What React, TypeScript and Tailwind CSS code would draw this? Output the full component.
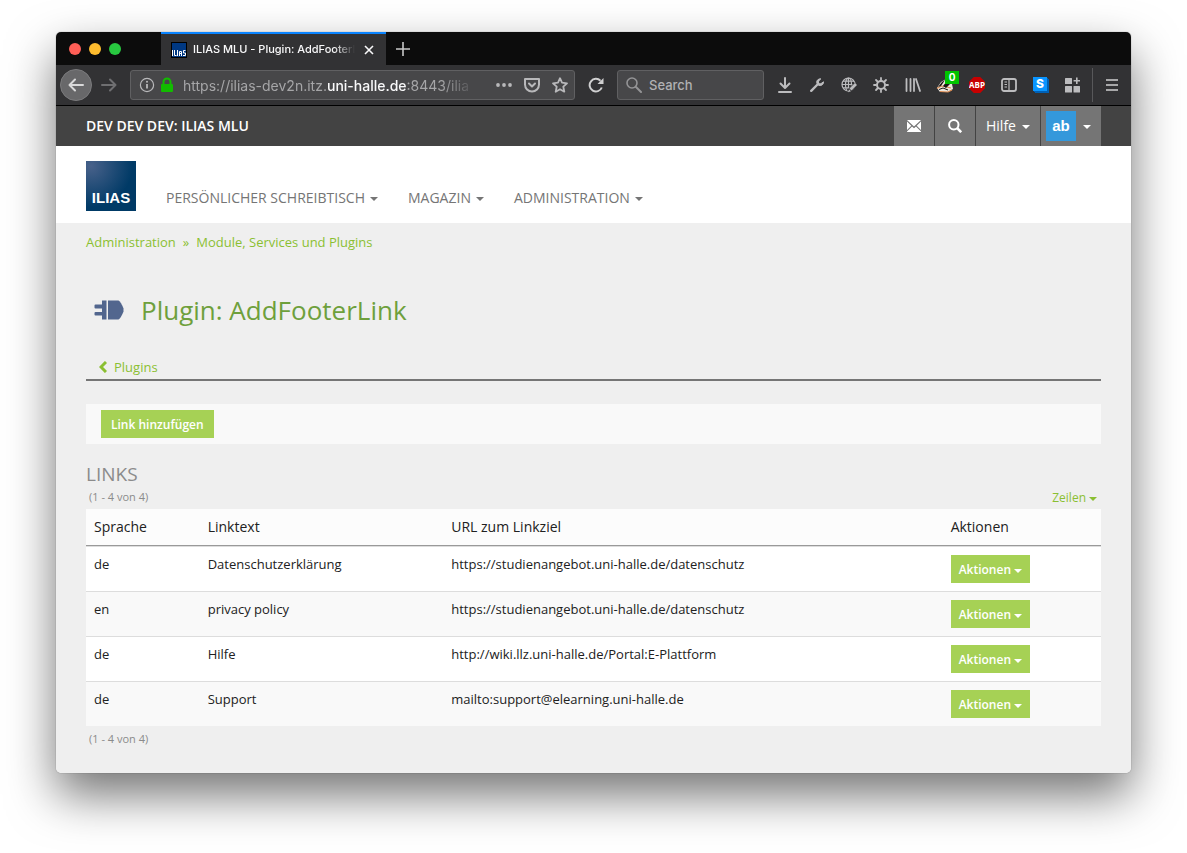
import type { ReactNode } from "react";

type LinkRow = { lang: string; text: string; url: string };

const rows: LinkRow[] = [
  { lang: "de", text: "Datenschutzerklärung", url: "https://studienangebot.uni-halle.de/datenschutz" },
  { lang: "en", text: "privacy policy", url: "https://studienangebot.uni-halle.de/datenschutz" },
  { lang: "de", text: "Hilfe", url: "http://wiki.llz.uni-halle.de/Portal:E-Plattform" },
  { lang: "de", text: "Support", url: "mailto:support@elearning.uni-halle.de" },
];

function Caret() {
  return (
    <span
      aria-hidden="true"
      className="mt-0.5 inline-block h-0 w-0 border-x-4 border-t-4 border-x-transparent border-t-current"
    />
  );
}

function ToolButton({ label, children }: { label: string; children: ReactNode }) {
  return (
    <button type="button" aria-label={label} className="relative flex h-8 w-8 shrink-0 items-center justify-center">
      {children}
    </button>
  );
}

function Stroke({ children }: { children: ReactNode }) {
  return (
    <svg
      className="shrink-0"
      width="16"
      height="16"
      viewBox="0 0 16 16"
      fill="none"
      stroke="currentColor"
      strokeWidth="2"
      strokeLinecap="round"
      strokeLinejoin="round"
      aria-hidden="true"
    >
      {children}
    </svg>
  );
}

function TabStrip() {
  return (
    <div className="flex h-[33px] bg-[#0c0c0c]">
      <div className="flex w-[105px] items-center gap-2 pl-[13px]">
        <button type="button" aria-label="Close window" className="h-3 w-3 rounded-full bg-[#ff5f57]" />
        <button type="button" aria-label="Minimize window" className="h-3 w-3 rounded-full bg-[#febc2e]" />
        <button type="button" aria-label="Zoom window" className="h-3 w-3 rounded-full bg-[#28c840]" />
      </div>
      <div className="flex w-[225px] items-center gap-1.5 border-t-2 border-[#0a84ff] bg-[#323234] pr-[9px] pl-2.5 text-[#f9f9fa]">
        <span className="flex h-4 w-4 shrink-0 items-end justify-center border border-black bg-[#003882]">
          <svg width="14" height="8" viewBox="0 0 14 8" fill="none" stroke="#fff" aria-hidden="true">
            <path d="M.5 1v6M2.500 1v5.500h2M5.500 1v6M7.500 7V2.500h2V7M7.500 4.500h2M13.500 1.500h-2v2.500h2v2.500h-2.500" />
          </svg>
        </span>
        <span className="min-w-0 flex-1 text-[11px] font-medium whitespace-nowrap [mask-image:linear-gradient(to_right,black_87%,transparent)]">
          ILIAS MLU - Plugin: AddFooterL
        </span>
        <button type="button" aria-label="Close tab" className="flex h-4 w-4 shrink-0 items-center justify-center">
          <svg width="10" height="10" viewBox="0 0 10 10" stroke="currentColor" strokeWidth="1.600" aria-hidden="true">
            <path d="M1 1l8 8M9 1l-8 8" />
          </svg>
        </button>
      </div>
      <button type="button" aria-label="New tab" className="flex w-[34px] items-center justify-center text-[#c8c8c8]">
        <svg width="14" height="14" viewBox="0 0 14 14" stroke="currentColor" strokeWidth="1.600" aria-hidden="true">
          <path d="M7 0v14M0 7h14" />
        </svg>
      </button>
    </div>
  );
}

function AddressBar() {
  return (
    <div className="flex h-[30px] min-w-0 flex-1 items-center rounded-[3px] border border-[#606062] bg-[#474749] pr-1.5 pl-2 text-[#b8b8ba]">
      <button type="button" aria-label="Site information" className="shrink-0">
        <svg width="16" height="16" viewBox="0 0 16 16" fill="none" stroke="currentColor" strokeWidth="1.200" aria-hidden="true">
          <circle cx="8" cy="8" r="6.600" />
          <path d="M8 7v4.500" strokeWidth="1.800" />
          <circle cx="8" cy="4.700" r="1" fill="currentColor" stroke="none" />
        </svg>
      </button>
      <svg className="ml-1 shrink-0" width="16" height="16" viewBox="0 0 16 16" fill="none" aria-hidden="true">
        <path d="M4.500 8V5a3.500 3.500 0 0 1 7 0v3" stroke="#12bc00" strokeWidth="2" />
        <rect x="2" y="7" width="12" height="8" rx="1" fill="#12bc00" />
      </svg>
      <div
        role="textbox"
        aria-label="Address"
        tabIndex={0}
        className="ml-2 min-w-0 flex-1 pt-0.5 text-sm whitespace-nowrap text-[#a6a6a8] [mask-image:linear-gradient(to_right,black_88%,transparent)]"
      >
        https://ilias-dev2n.itz.<span className="font-medium text-[#f9f9fa]">uni-halle.de</span>:8443/ilia
      </div>
      <div className="ml-5 flex shrink-0 gap-3">
        <button type="button" aria-label="Page actions">
          <svg width="16" height="16" viewBox="0 0 16 16" fill="currentColor" aria-hidden="true">
            <circle cx="2" cy="8" r="1.900" />
            <circle cx="8" cy="8" r="1.900" />
            <circle cx="14" cy="8" r="1.900" />
          </svg>
        </button>
        <button type="button" aria-label="Save to Pocket">
          <Stroke>
            <path d="M1 2h14v5.500a7 7 0 0 1-14 0z" />
            <path d="M5 6.500L8 9.500l3-3" />
          </Stroke>
        </button>
        <button type="button" aria-label="Bookmark this page">
          <svg width="16" height="16" viewBox="0 0 16 16" fill="none" stroke="currentColor" strokeWidth="1.800" strokeLinejoin="round" aria-hidden="true">
            <path d="M8 1.200l2 4.500 5 .6-3.700 3.400 1 5L8 12.200l-4.300 2.500 1-5L1 6.300l5-.6z" />
          </svg>
        </button>
      </div>
    </div>
  );
}

function Extensions() {
  return (
    <div className="flex shrink-0 text-[#bcbcbe]">
      <ToolButton label="Downloads">
        <Stroke>
          <path d="M8 1v9.500M3.500 6.500L8 11l4.500-4.500M2 15h12" />
        </Stroke>
      </ToolButton>
      <ToolButton label="Developer tools">
        <svg width="16" height="16" viewBox="0 0 16 16" fill="none" stroke="currentColor" strokeLinecap="round" aria-hidden="true">
          <path d="M2.200 13.800L8.500 7.500" strokeWidth="2.400" />
          <path d="M11.500 1.800a3.400 3.400 0 1 0 3 3L12 6.500 9.600 4.600z" fill="currentColor" strokeWidth="1" strokeLinejoin="round" />
          <path d="M11 5.200l3-3" stroke="#323234" strokeWidth="2" />
        </svg>
      </ToolButton>
      <ToolButton label="Web developer">
        <svg width="16" height="16" viewBox="0 0 16 16" fill="none" stroke="currentColor" strokeWidth="1.200" aria-hidden="true">
          <circle cx="7.500" cy="7.500" r="6.500" />
          <ellipse cx="7.500" cy="7.500" rx="3" ry="6.500" />
          <path d="M1 7.500h13M2 4.200h11M2 10.800h9M7.500 1v13" />
          <path d="M7.500 14.500l7.500-7.500" stroke="#323234" strokeWidth="4.500" />
          <path d="M9.500 12.500l5.500-5.500" strokeWidth="3" />
          <path d="M7 15.200l1-3 2 2z" fill="currentColor" stroke="none" />
        </svg>
      </ToolButton>
      <ToolButton label="Preferences">
        <svg width="16" height="16" viewBox="0 0 16 16" fill="none" stroke="currentColor" strokeWidth="2" strokeLinecap="round" aria-hidden="true">
          <circle cx="8" cy="8" r="4" />
          <path d="M8 1v2M8 13v2M1 8h2M13 8h2M3 3l1.500 1.500M11.500 11.500L13 13M13 3l-1.500 1.500M4.500 11.500L3 13" strokeWidth="1.800" />
        </svg>
      </ToolButton>
      <ToolButton label="Library">
        <Stroke>
          <path d="M1.500 2v12M5.500 2v12M9 2v12M11 2l4 12" strokeWidth="1.800" />
        </Stroke>
      </ToolButton>
      <ToolButton label="Privacy Badger">
        <svg width="18" height="16" viewBox="0 0 18 16" aria-hidden="true">
          <path d="M1 11L5 5 10 2l6 5 1 5-5 3H4z" fill="#ede7df" />
          <path d="M1 11.500l4-2.500 4 .5 6 1.500M4 14.500l8 .5 4-2" fill="none" stroke="#db8a52" strokeWidth="1.200" />
          <path d="M2 10l4-5 3-2-4 6zM7 9l4-5 3 3-4 4z" fill="#1c1815" />
          <path d="M3 12.500l4-1.500 5 2" fill="none" stroke="#1c1815" />
        </svg>
        <span className="absolute top-0.5 right-0.5 flex h-[13px] w-3.5 items-center justify-center bg-[#00c400] text-[10px] font-bold text-white">
          0
        </span>
      </ToolButton>
      <ToolButton label="Adblock Plus">
        <span className="flex h-4 w-4 items-center justify-center bg-[#c70000] font-['Open_Sans',sans-serif] text-[8px] leading-4 font-bold text-white [clip-path:polygon(30%_0,70%_0,100%_30%,100%_70%,70%_100%,30%_100%,0_70%,0_30%)]">
          ABP
        </span>
      </ToolButton>
      <ToolButton label="Sidebars">
        <svg width="16" height="16" viewBox="0 0 16 16" fill="none" stroke="currentColor" aria-hidden="true">
          <rect x="1" y="2" width="14" height="12" rx="2" strokeWidth="1.800" />
          <path d="M8 2v12M3.500 5h2.500M3.500 7.500h2.500M3.500 10h2.500" strokeWidth="1.200" />
        </svg>
      </ToolButton>
      <ToolButton label="Stylish">
        <span className="mr-0.5 mb-0.5 flex h-[14px] w-[14px] items-center justify-center bg-[#0a95ff] text-xs font-extrabold text-white shadow-[1px_1px_0_#0060b5,2px_2px_0_#0060b5]">
          S
        </span>
      </ToolButton>
      <ToolButton label="Add-ons">
        <svg width="16" height="16" viewBox="0 0 16 16" fill="currentColor" aria-hidden="true">
          <rect x="0" y="1" width="7" height="6" rx=".5" />
          <rect x="0" y="9" width="7" height="6.500" rx=".5" />
          <rect x="8.500" y="9" width="6.500" height="6.500" rx=".5" />
          <path d="M11 .5h1.600v2.400h2.400v1.600h-2.400v2.400H11V4.500H8.600V2.900H11z" />
        </svg>
      </ToolButton>
    </div>
  );
}

function NavBar() {
  return (
    <div className="flex h-[41px] items-center border-b border-black bg-[#323234] px-1">
      <button type="button" aria-label="Back" className="flex h-8 w-8 shrink-0 items-center justify-center rounded-full border border-[#7b7b7d] bg-[#68686a] text-[#d9d9da]">
        <Stroke>
          <path d="M15 8H1.500M7 2.500L1.500 8 7 13.500" />
        </Stroke>
      </button>
      <button type="button" aria-label="Forward" className="flex w-[38px] shrink-0 items-center pl-[9px] text-[#6f6f71]">
        <Stroke>
          <path d="M1 8h13.500M9 2.500L14.500 8 9 13.500" />
        </Stroke>
      </button>
      <AddressBar />
      <button type="button" aria-label="Reload" className="flex w-[42px] shrink-0 items-center justify-center text-[#cfcfd0]">
        <svg width="16" height="16" viewBox="0 0 16 16" fill="none" stroke="currentColor" strokeWidth="2" aria-hidden="true">
          <path d="M13.800 10.500A6.300 6.300 0 1 1 12.500 3.800" />
          <path d="M15.500 1v6h-6z" fill="currentColor" stroke="none" />
        </svg>
      </button>
      <label className="mr-[5px] flex h-[30px] w-[147px] shrink-0 items-center gap-[7px] rounded-[3px] border border-[#606062] bg-[#474749] pl-2 text-[#949496]">
        <Stroke>
          <circle cx="6" cy="6" r="5" strokeWidth="1.600" />
          <path d="M10 10l5 5" />
        </Stroke>
        <input
          type="search"
          aria-label="Search"
          placeholder="Search"
          className="w-full min-w-0 bg-transparent pt-0.5 text-[13px] font-medium outline-none placeholder:text-[#b1b1b3]"
        />
      </label>
      <Extensions />
      <div className="ml-[3px] h-[34px] w-px shrink-0 bg-[#58585a]" />
      <button type="button" aria-label="Menu" className="ml-1 flex h-8 w-[30px] shrink-0 items-center justify-center text-[#cfcfd0]">
        <svg width="12" height="12" viewBox="0 0 12 12" stroke="currentColor" strokeWidth="1.600" aria-hidden="true">
          <path d="M0 1h12M0 6h12M0 11h12" />
        </svg>
      </button>
    </div>
  );
}

function TopBar() {
  return (
    <div className="flex h-10 items-center justify-between bg-[#434343] px-[30px] text-sm text-white">
      <span className="font-semibold">DEV DEV DEV: ILIAS MLU</span>
      <div className="flex h-full gap-px">
        <button type="button" aria-label="Mail" className="flex w-10 items-center justify-center bg-[#757575]">
          <svg width="14" height="12" viewBox="0 0 14 12" fill="currentColor" aria-hidden="true">
            <path d="M0 0h14L7 6.500zM0 1.500L4.300 5.700 0 10zM14 1.500V10L9.700 5.700zM0 12v-.5l5-5 2 1.800 2-1.800 5 5v.5z" />
          </svg>
        </button>
        <button type="button" aria-label="Suche" className="flex w-10 items-center justify-center bg-[#757575]">
          <svg width="14" height="14" viewBox="0 0 14 14" fill="none" stroke="currentColor" strokeWidth="2" aria-hidden="true">
            <circle cx="5.800" cy="5.800" r="4.700" />
            <path d="M9.200 9.200l4 4" strokeWidth="2.600" />
          </svg>
        </button>
        <button type="button" className="flex w-16 items-center justify-center gap-1.5 bg-[#757575]">
          Hilfe <Caret />
        </button>
        <button type="button" className="flex w-[60px] items-center gap-[7px] bg-[#757575] pl-[5px]">
          <span className="flex h-[30px] w-[30px] items-center justify-center bg-[#3498db] font-['Liberation_Sans',Arial,sans-serif] text-[15px] font-bold">
            ab
          </span>
          <Caret />
        </button>
      </div>
    </div>
  );
}

function MainNav() {
  return (
    <header className="flex h-[77px] items-start bg-white px-[30px] pt-[15px]">
      <a
        href="#"
        className="flex h-[50px] w-[50px] items-end justify-center bg-[#003a66] bg-[radial-gradient(circle_at_10%_10%,#48618a,#003a66_65%)] pb-1 font-['Liberation_Sans',Arial,sans-serif] text-[15px] leading-[18px] font-bold text-white"
      >
        ILIAS
      </a>
      <nav className="ml-[30px] flex gap-[30px] pt-[27px] text-sm leading-5 text-[#757575]">
        {["PERSÖNLICHER SCHREIBTISCH", "MAGAZIN", "ADMINISTRATION"].map((item) => (
          <a key={item} href="#" className="flex items-center gap-[5px]">
            {item} <Caret />
          </a>
        ))}
      </nav>
    </header>
  );
}

function LinksTable() {
  return (
    <section>
      <h2 className="pt-[19px] text-[19px] leading-[22px] text-[#8b8b8b]">LINKS</h2>
      <div className="flex h-6 items-center justify-between pt-px pr-1 pl-[3px]">
        <span className="text-[11px] text-[#8b8b8b]">(1 - 4 von 4)</span>
        <button type="button" className="flex items-center gap-[3px] text-xs text-[#8bbf32]">
          Zeilen <Caret />
        </button>
      </div>
      <table className="w-full table-fixed border-separate border-spacing-0 text-left text-[#212121]">
        <thead className="bg-[#fcfcfc] text-sm leading-5">
          <tr>
            <th className="w-[11.2%] border-b border-[#999] px-2 py-2 font-normal">Sprache</th>
            <th className="w-[24%] border-b border-[#999] px-2 py-2 font-normal">Linktext</th>
            <th className="w-[49.2%] border-b border-[#999] px-2 py-2 font-normal">URL zum Linkziel</th>
            <th className="border-b border-[#999] px-2 py-2 font-normal">Aktionen</th>
          </tr>
        </thead>
        <tbody className="text-[13px] leading-[18px]">
          {rows.map((row) => (
            <tr key={row.text} className="bg-white even:bg-[#f9f9f9]">
              <td className="border-t border-[#ddd] p-2 align-top">{row.lang}</td>
              <td className="border-t border-[#ddd] p-2 align-top">{row.text}</td>
              <td className="border-t border-[#ddd] p-2 align-top">{row.url}</td>
              <td className="border-t border-[#ddd] p-2 align-top">
                <button type="button" className="flex h-7 items-center gap-[3px] bg-[#a6d155] px-2 pt-0.5 text-xs font-semibold text-white">
                  Aktionen <Caret />
                </button>
              </td>
            </tr>
          ))}
        </tbody>
      </table>
      <p className="pt-1 pl-[3px] text-[11px] leading-[18px] text-[#8b8b8b]">(1 - 4 von 4)</p>
    </section>
  );
}

export default function App() {
  return (
    <div className="min-h-screen bg-white px-14 pt-8 pb-20">
      <div className="rounded-[5px] shadow-[0_0_1px_rgba(0,0,0,0.6),0_22px_48px_rgba(0,0,0,0.55)]">
        <div className="overflow-hidden rounded-[5px]">
          <div className="font-[Inter,sans-serif]">
            <TabStrip />
            <NavBar />
          </div>
          <div className="bg-[#efefef] font-['Open_Sans',sans-serif]">
            <TopBar />
            <MainNav />
            <main className="px-[30px] pt-[9px] pb-[25px]">
              <nav aria-label="Breadcrumb" className="flex gap-[7px] text-[13px] leading-5 text-[#8bbf32]">
                <a href="#">Administration</a>
                <span>»</span>
                <a href="#">Module, Services und Plugins</a>
              </nav>
              <div className="flex items-center gap-[17px] pt-10 pl-2">
                <svg width="30" height="20" viewBox="0 0 30 20" fill="#52668e" aria-hidden="true">
                  <path d="M1.500 4.500H8V.5h4.500v19H8v-4H1.500a1 1 0 0 1-1-1V13a1 1 0 0 1 1-1H8V8.500H1.500a1 1 0 0 1-1-1v-2a1 1 0 0 1 1-1z" />
                  <path d="M14 .5h10.500Q27 2 29.500 8.500v3Q27 18 24.500 19.500H14z" />
                </svg>
                <h1 className="text-[26px] leading-9 text-[#6ea03c]">Plugin: AddFooterLink</h1>
              </div>
              <div className="mt-[29px] flex border-b-2 border-[#757575] pb-0.5 pl-[13px]">
                <a href="#" className="flex items-center gap-[7px] text-[13px] leading-5 text-[#8bbf32]">
                  <svg width="8" height="12" viewBox="0 0 8 12" fill="none" stroke="currentColor" strokeWidth="3" aria-hidden="true">
                    <path d="M7 1L2 6l5 5" />
                  </svg>
                  Plugins
                </a>
              </div>
              <div className="mt-[23px] flex h-10 items-center bg-[#f9f9f9] px-[15px]">
                <button type="button" className="h-7 bg-[#a6d155] px-2.5 pt-0.5 text-xs font-semibold text-white">
                  Link hinzufügen
                </button>
              </div>
              <LinksTable />
            </main>
          </div>
        </div>
      </div>
    </div>
  );
}
